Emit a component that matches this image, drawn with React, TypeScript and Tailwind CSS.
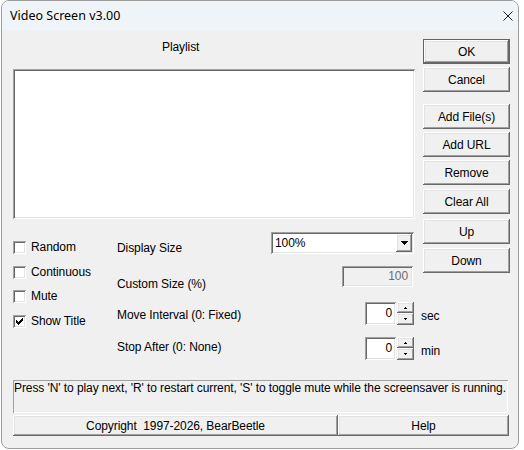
import React from "react";

// Classic Win32 bevels
const raised =
  "bg-[#f0f0f0] shadow-[inset_-1px_-1px_#696969,inset_1px_1px_#ffffff,inset_-2px_-2px_#a0a0a0,inset_2px_2px_#e3e3e3]";
const sunken =
  "shadow-[inset_1px_1px_#a0a0a0,inset_-1px_-1px_#ffffff,inset_2px_2px_#696969,inset_-2px_-2px_#e3e3e3]";

const DlgButton = ({
  label,
  isDefault,
  className = "",
}: {
  label: string;
  isDefault?: boolean;
  className?: string;
}) => {
  if (isDefault) {
    return (
      <div className={`h-[25px] border border-[#646464] ${className}`}>
        <div className={`flex h-full items-center justify-center pt-[1px] ${raised}`}>{label}</div>
      </div>
    );
  }
  return (
    <div className={`flex h-[25px] items-center justify-center pt-[1px] ${raised} ${className}`}>
      {label}
    </div>
  );
};

const CheckMark = () => (
  <svg width="13" height="13" viewBox="0 0 13 13" shapeRendering="crispEdges" className="absolute left-0 top-0">
    {[2, 3, 4, 3, 2, 1, 0].map((y, i) => (
      <rect key={i} x={3 + i} y={3 + y} width="1" height="3" fill="#000" />
    ))}
  </svg>
);

const CheckBox = ({ label, checked, className = "" }: { label: string; checked?: boolean; className?: string }) => (
  <div className={`flex h-[13px] items-center ${className}`}>
    <div className={`relative size-[13px] shrink-0 bg-white ${sunken}`}>{checked && <CheckMark />}</div>
    <span className="ml-[5px] whitespace-nowrap">{label}</span>
  </div>
);

// small solid arrow for the combo / spin buttons
const Arrow = ({ up, widths }: { up?: boolean; widths: number[] }) => {
  const w = widths[0];
  const rows = up ? [...widths].reverse() : widths;
  return (
    <svg width={w} height={rows.length} shapeRendering="crispEdges">
      {rows.map((rw, i) => (
        <rect key={i} x={(w - rw) / 2} y={i} width={rw} height="1" fill="#000" />
      ))}
    </svg>
  );
};

const SpinEdit = ({ value, unit }: { value: string; unit: string }) => (
  <div className="flex h-[23px]">
    <div className={`flex w-[31px] items-center justify-end bg-white pr-[4px] ${sunken}`}>{value}</div>
    <div className="ml-[1px] flex w-[17px] flex-col">
      <div className={`flex h-[11px] items-center justify-center ${raised}`}>
        <Arrow up widths={[3, 1]} />
      </div>
      <div className={`flex h-[12px] items-center justify-center ${raised}`}>
        <Arrow widths={[3, 1]} />
      </div>
    </div>
    {/* unit label hangs past the column edge */}
    <div className="w-0 whitespace-nowrap pt-[8px]">
      <span className="ml-[7px]">{unit}</span>
    </div>
  </div>
);

export default function App() {
  return (
    <div className="h-[450px] w-[524px] overflow-hidden bg-white">
      <div
        className="ml-[1px] flex h-[449px] w-[518px] flex-col overflow-hidden rounded-[8px] border border-[#9c9c9c] bg-[#f0f0f0] text-[12px] leading-[13px] tracking-[-0.08px] text-black"
        style={{ fontFamily: '"Liberation Sans", Arial, sans-serif' }}
      >
        {/* title bar */}
        <div className="flex h-[30px] shrink-0 items-center justify-between bg-[#eef4f8] pl-[8px] pr-[5px]">
          <span
            className="text-[12.5px] leading-[16px] tracking-normal"
            style={{ fontFamily: '"Noto Sans", "Open Sans", sans-serif' }}
          >
            Video Screen v3.00
          </span>
          <svg width="10" height="10" viewBox="0 0 10 10" className="mt-[-1px]">
            <path d="M0.5 0.5 L9.5 9.5 M9.5 0.5 L0.5 9.5" stroke="#1a1a1a" strokeWidth="1" />
          </svg>
        </div>

        {/* dialog body */}
        <div className="flex flex-1 flex-col">
          <div className="flex h-[349px] pl-[11px]">
            <div className="flex w-[402px] flex-col">
              <div className="mt-[10px] pl-[149px]">Playlist</div>
              <div className={`mt-[15px] h-[150px] bg-white ${sunken}`} />

              <div className="flex">
                <div className="flex w-[104px] flex-col pt-[22px]">
                  <CheckBox label="Random" />
                  <CheckBox label="Continuous" className="mt-[12px]" />
                  <CheckBox label="Mute" className="mt-[11px]" />
                  <CheckBox label="Show Title" checked className="mt-[12px]" />
                </div>

                <div className="flex flex-1 flex-col pr-[1px]">
                  <div className="mt-[13px] flex h-[22px] justify-between">
                    <span className="mt-[10px]">Display Size</span>
                    <div className={`flex w-[143px] items-center justify-between bg-white p-[2px] ${sunken}`}>
                      <span className="pl-[2px]">100%</span>
                      <div className={`flex h-[18px] w-[16px] items-center justify-center ${raised}`}>
                        <Arrow widths={[7, 5, 3, 1]} />
                      </div>
                    </div>
                  </div>

                  <div className="mt-[12px] flex h-[21px] justify-between">
                    <span className="mt-[12px]">Custom Size (%)</span>
                    <div className={`mr-[1px] flex w-[71px] items-center justify-end bg-[#f0f0f0] pr-[5px] text-[#6d6d6d] ${sunken}`}>
                      100
                    </div>
                  </div>

                  <div className="mt-[15px] flex h-[23px] justify-between">
                    <span className="mt-[7px]">Move Interval (0: Fixed)</span>
                    <SpinEdit value="0" unit="sec" />
                  </div>

                  <div className="mt-[12px] flex h-[24px] justify-between">
                    <span className="mt-[4px]">Stop After (0: None)</span>
                    <SpinEdit value="0" unit="min" />
                  </div>
                </div>
              </div>
            </div>

            <div className="ml-[8px] flex w-[87px] flex-col">
              <DlgButton label="OK" isDefault className="mt-[8px]" />
              <DlgButton label="Cancel" className="mt-[3px]" />
              <DlgButton label="Add File(s)" className="mt-[12px]" />
              <DlgButton label="Add URL" className="mt-[3px]" />
              <DlgButton label="Remove" className="mt-[3px]" />
              <DlgButton label="Clear All" className="mt-[4px]" />
              <DlgButton label="Up" className="mt-[5px]" />
              <DlgButton label="Down" className="mt-[4px]" />
            </div>
          </div>

          <div className="ml-[11px] h-[33px] w-[495px] whitespace-nowrap pl-[1px] pt-[2px] shadow-[inset_1px_1px_#a0a0a0,inset_-1px_-1px_#ffffff]">
            Press 'N' to play next, 'R' to restart current, 'S' to toggle mute while the screensaver is running.
          </div>

          <div className="ml-[11px] mt-[2px] flex h-[21px]">
            <div className={`flex w-[325px] items-center justify-center whitespace-pre pt-[1px] ${raised}`}>
              Copyright  1997-2026, BearBeetle
            </div>
            <div className={`flex w-[171px] items-center justify-center pt-[1px] ${raised}`}>Help</div>
          </div>
        </div>
      </div>
    </div>
  );
}
